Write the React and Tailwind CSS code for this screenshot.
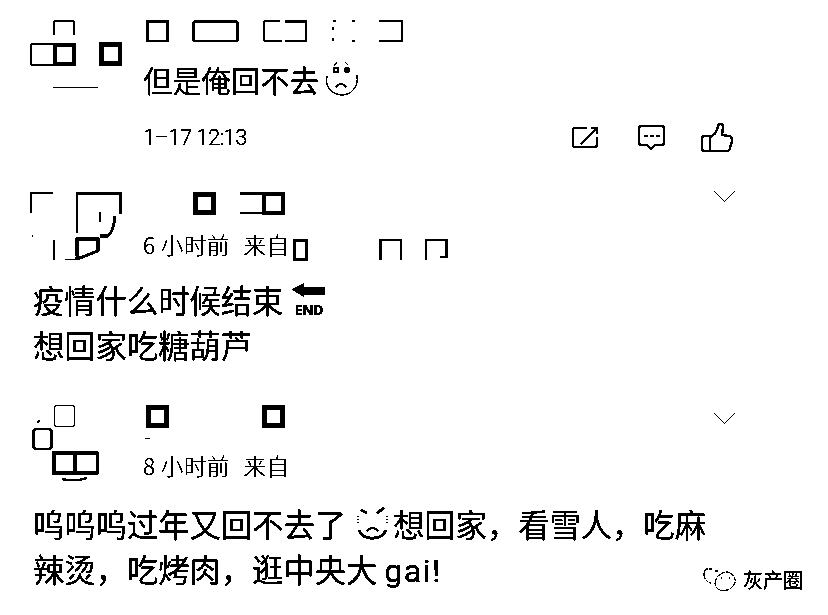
const body = 'text-[31.3px] leading-[45px] text-black whitespace-nowrap';
const meta = 'text-[22.5px] leading-[30px] font-light text-black whitespace-pre';

const Chevron = () => (
  <svg viewBox="0 0 23 13" className="w-[23px] h-[13px] fill-none stroke-black">
    <path d="M1 1 L11.5 11.5 L22 1" />
  </svg>
);

const Comment = ({ avatar, children }) => (
  <section className="flex items-start">
    {avatar}
    {children}
  </section>
);

const Ago = ({ hours }) => (
  <span className={`${meta} tracking-[0.4px]`}>
    {hours} 小时前<span className="ml-[14px]">来自</span>
  </span>
);

export default function App() {
  return (
    <div className="relative w-[828px] h-[615px] overflow-hidden bg-white [filter:url(#bw)] font-['Noto_Sans_CJK_SC','Noto_Sans',sans-serif]">
      <svg className="absolute w-0 h-0">
        <filter id="bw" colorInterpolationFilters="sRGB">
          <feColorMatrix type="saturate" values="0" />
          <feComponentTransfer>
            <feFuncR type="discrete" tableValues="0 0 0 1" />
            <feFuncG type="discrete" tableValues="0 0 0 1" />
            <feFuncB type="discrete" tableValues="0 0 0 1" />
          </feComponentTransfer>
        </filter>
      </svg>

      {/* first comment */}
      <div className="pt-[20px] pl-[30px]">
        <Comment
          avatar={
            <svg viewBox="30 20 92 70" className="w-[92px] h-[70px] shrink-0 fill-none stroke-black">
              <path d="M54 35 V21 H74 V35" />
              <path d="M53 44 H31 V65 H53" />
              <rect x="55" y="45" width="19" height="19" strokeWidth="3.5" />
              <rect x="101.5" y="44.5" width="19" height="19" strokeWidth="4" />
              <path d="M53 87.5 H98" />
            </svg>
          }
        >
          <div className="ml-[21px] w-[591px] shrink-0">
            <svg viewBox="143 20 262 22" className="block w-[262px] h-[22px] fill-none stroke-black">
              <rect x="147.5" y="21.5" width="20" height="20" strokeWidth="3" />
              <rect x="193.5" y="21.5" width="44" height="20" rx="2" strokeWidth="2" />
              <path d="M280 21 H264 V41 H282" />
              <path d="M285 21.5 H306 V41 H285" strokeWidth="2" />
              <path d="M333 21 H336 M333 27 V30 M352 21 H355 M333 38 V41 M352 41 H355" strokeWidth="1.5" />
              <path d="M379 21 H402 V41 H379" strokeWidth="1.5" />
            </svg>
            <div className="mt-[17px] h-[40px] flex items-center">
              <span className="w-[182px] text-[29.3px] leading-[40px] text-black">但是俺回不去</span>
              <svg viewBox="325 64 34 34" className="w-[34px] h-[34px] fill-none stroke-black">
                <path d="M327 78 C324 92 336 97 342 97 C350 97 359 90 357 77" />
                <path d="M337 64 L334 68 M345 64 L348 67" />
                <circle cx="336" cy="72" r="2.5" strokeWidth="1.5" />
                <circle cx="347" cy="72" r="2.5" fill="black" />
                <path d="M336 89 C339 85 343 85 346 89" strokeWidth="1.5" />
              </svg>
            </div>
            <div className="mt-[23px] flex items-center justify-between">
              <span className={`${meta} mt-[1px] text-[22px] tracking-[-0.6px] font-['Roboto',sans-serif]`}>1–17 12:13</span>
              <div className="flex items-center">
                <svg viewBox="573 125 28 24" className="w-[28px] h-[24px] fill-none stroke-black stroke-2">
                  <path d="M588 127 H576 Q574 127 574 129 V144 Q574 146 576 146 H596 Q598 146 598 144 V136" />
                  <path d="M582 143 L597 128" strokeWidth="1.5" />
                  <path d="M592 127 H598 V133" />
                </svg>
                <svg viewBox="639 124 27 27" className="ml-[38px] w-[27px] h-[27px] fill-none stroke-black stroke-2">
                  <path d="M643 126 H662 Q665 126 665 129 V142 Q665 145 662 145 H656 L652 149 L648 145 H643 Q640 145 640 142 V129 Q640 126 643 126 Z" />
                  <path d="M645 136 H661" strokeDasharray="4 2" />
                </svg>
                <svg viewBox="702 122 33 30" className="ml-[36px] w-[33px] h-[30px] fill-none stroke-black stroke-2">
                  <path d="M711 136 C716 134 718 130 719 125 C720 122 724 122 724 126 L723 134 L730 135 C733 135 733 138 733 140 L731 147 C730 150 729 150 727 150 H706 C704 150 703 149 703 147 V138 C703 136 704 135 706 135 H711 V150" />
                </svg>
              </div>
            </div>
          </div>
        </Comment>
      </div>

      {/* second comment */}
      <div className="mt-[39px] pl-[30px]">
        <Comment
          avatar={
            <svg viewBox="30 192 92 70" className="w-[92px] h-[70px] shrink-0 fill-none stroke-black">
              <path d="M31 213 V193 H53" strokeWidth="1.5" />
              <path d="M77 233 V193.5 H120.5 V214" strokeWidth="2" />
              <path d="M100 212 V222" />
              <path d="M115 216 C114 226 112 233 108 236 H100" strokeWidth="2.5" />
              <path d="M54 240 V260" strokeWidth="1.5" />
              <path d="M65 259.5 H77" strokeWidth="1.5" />
              <path d="M77 259 L98 251 V239 H77 V259" strokeWidth="2.5" />
              <path d="M32 236 H33" />
            </svg>
          }
        >
          <div className="ml-[21px] w-[593px] shrink-0">
            <div className="flex items-start justify-between">
              <svg viewBox="143 192 145 23" className="block w-[145px] h-[23px] fill-none stroke-black">
                <rect x="195.5" y="194.5" width="18" height="18" strokeWidth="5" />
                <path d="M240 193.5 H262 M240 213 H262" strokeWidth="1.5" />
                <rect x="264" y="194" width="19" height="19" strokeWidth="3.5" />
              </svg>
              <div className="-mt-[2px]">
                <Chevron />
              </div>
            </div>
            <div className="mt-[14px] flex items-start">
              <span className="w-[150px] shrink-0">
                <Ago hours="6" />
              </span>
              <svg viewBox="293 239 155 22" className="mt-[10px] w-[155px] h-[22px] fill-none stroke-black">
                <rect x="294.5" y="240.5" width="12" height="19" strokeWidth="3" />
                <path d="M380.5 260 V240 H401 V260" strokeWidth="2" />
                <path d="M426 260 V240 H446.5 V257 H440" strokeWidth="2" />
              </svg>
            </div>
          </div>
        </Comment>
        <div className={`${body} ml-[3px] mt-[15px]`}>
          <div className="flex items-center h-[45px]">
            <span>疫情什么时候结束</span>
            <span className="ml-[9px] w-[33px] flex flex-col items-center">
              <svg viewBox="292 285 33 14" className="block w-[33px] h-[14px] fill-black">
                <path d="M292 291.5 L304 285 V289.5 H325 V296.5 H304 V299 Z" />
              </svg>
              <span className="mt-[7px] text-[14px] leading-[12px] tracking-[-0.5px] font-bold font-['Open_Sans',sans-serif]">END</span>
            </span>
          </div>
          <div>想回家吃糖葫芦</div>
        </div>
      </div>

      {/* third comment */}
      <div className="mt-[38px] pl-[30px]">
        <Comment
          avatar={
            <svg viewBox="30 405 92 77" className="w-[92px] h-[77px] shrink-0 fill-none stroke-black">
              <rect x="54.5" y="405.5" width="20" height="21" rx="1.5" />
              <path d="M39 420 L38 423" strokeWidth="1.5" />
              <rect x="33.5" y="429" width="18" height="20" rx="3" strokeWidth="2" />
              <rect x="54" y="453" width="21" height="20" strokeWidth="3" />
              <path d="M75 453 H97.5 V473 H75" strokeWidth="2.5" />
              <path d="M62 479 C70 481 78 481 87 478" strokeWidth="2" />
            </svg>
          }
        >
          <div className="ml-[21px] w-[593px] shrink-0">
            <div className="flex items-start justify-between">
              <svg viewBox="143 405 145 35" className="block w-[145px] h-[35px] fill-none stroke-black">
                <rect x="148.5" y="407.5" width="18" height="18" strokeWidth="5" />
                <rect x="264.5" y="407.5" width="18" height="18" strokeWidth="5" />
                <path d="M145 438.5 H150" />
              </svg>
              <div className="mt-[7px]">
                <Chevron />
              </div>
            </div>
            <div className="mt-[10px]">
              <Ago hours="8" />
            </div>
          </div>
        </Comment>
        <div className={`${body} ml-[3px] mt-[19px]`}>
          <div className="flex items-center h-[45px]">
            <span>呜呜呜过年又回不去了</span>
            <svg viewBox="357 507 32 34" className="ml-[11px] w-[32px] h-[34px] shrink-0 fill-none stroke-black">
              <path d="M361 510 L367 513 M384 508 L377 513" strokeWidth="2.5" />
              <path d="M358 516 V524 M387 516 V524" strokeDasharray="1 2" />
              <path d="M359 530 C362 541 382 541 386 530" strokeWidth="2.5" />
              <path d="M367 531 C370 527 375 527 378 531" strokeWidth="1.5" />
            </svg>
            <span className="ml-[4px]">想回家，看雪人，吃麻</span>
          </div>
          <div className="flex items-baseline">
            <span>辣烫，吃烤肉，逛中央大</span>
            <span className="ml-[7px] text-[32px] tracking-[1.5px] font-['Roboto',sans-serif]">gai!</span>
          </div>
        </div>
      </div>

      {/* watermark */}
      <div className="absolute left-[703px] top-[567px] flex items-center">
        <svg viewBox="703 568 34 25" className="w-[34px] h-[25px] fill-none stroke-black">
          <path d="M706 570 C702 575 704 582 711 584 M712 570 L706 570 M718 572 L714 572" strokeDasharray="3 1" />
          <path d="M721 575 C728 570 736 576 735 583 C734 590 724 594 718 590 C713 586 715 578 721 575 Z" strokeDasharray="4 1" />
          <path d="M721 579 H722 M729 579 H730" />
        </svg>
        <span className="ml-[6px] text-[20px] leading-[25px] text-black">灰产圈</span>
      </div>
    </div>
  );
}
